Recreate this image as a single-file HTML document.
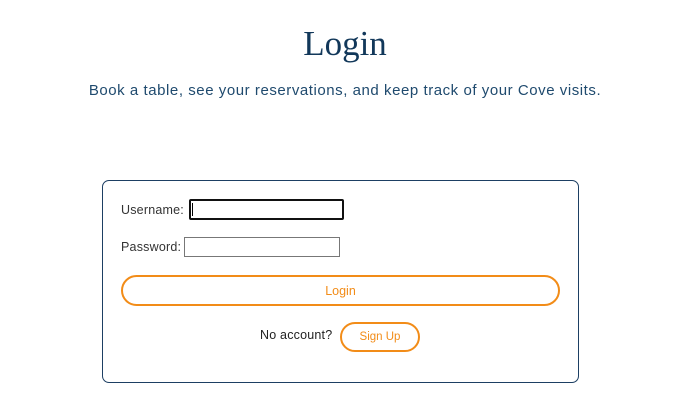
<!DOCTYPE html>
<html><head><style>
body{margin:0;width:690px;height:420px;background:#fff;position:relative;font-family:"Liberation Sans",sans-serif;overflow:hidden}
.a{position:absolute;white-space:nowrap}
h1{position:absolute;margin:0;left:0;width:690px;top:24px;text-align:center;font-family:"Liberation Serif",serif;font-weight:normal;font-size:35px;color:#12385a}
.sub{left:0;width:690px;text-align:center;top:82px;font-size:15px;color:#1f4a6e;letter-spacing:0.55px}
.card{position:absolute;left:102px;top:180px;width:475px;height:201px;border:1px solid #1d3f63;border-radius:7px}
.lbl{font-size:12.5px;color:#333;letter-spacing:0.2px}
.btn{position:absolute;box-sizing:border-box;border:2px solid #f28c18;border-radius:16px;color:#f28c18;text-align:center;font-size:12.5px}
</style></head><body>
<h1>Login</h1>
<div class="a sub">Book a table, see your reservations, and keep track of your Cove visits.</div>
<div class="card"></div>
<div class="a lbl" style="left:121px;top:203px">Username:</div>
<div class="a" style="left:189px;top:199px;width:155px;height:21px;box-sizing:border-box;border:2px solid #111;border-radius:2px"></div>
<div class="a" style="left:192px;top:203px;width:1px;height:13px;background:#000"></div>
<div class="a lbl" style="left:121px;top:240px">Password:</div>
<div class="a" style="left:184px;top:237px;width:156px;height:20px;box-sizing:border-box;border:1px solid #777"></div>
<div class="btn" style="left:121px;top:275px;width:439px;height:31px;line-height:28px">Login</div>
<div class="a lbl" style="left:260px;top:328px;color:#222">No account?</div>
<div class="btn" style="left:340px;top:322px;width:80px;height:30px;line-height:27px;font-size:11.5px;border-radius:15px">Sign Up</div>
</body></html>
